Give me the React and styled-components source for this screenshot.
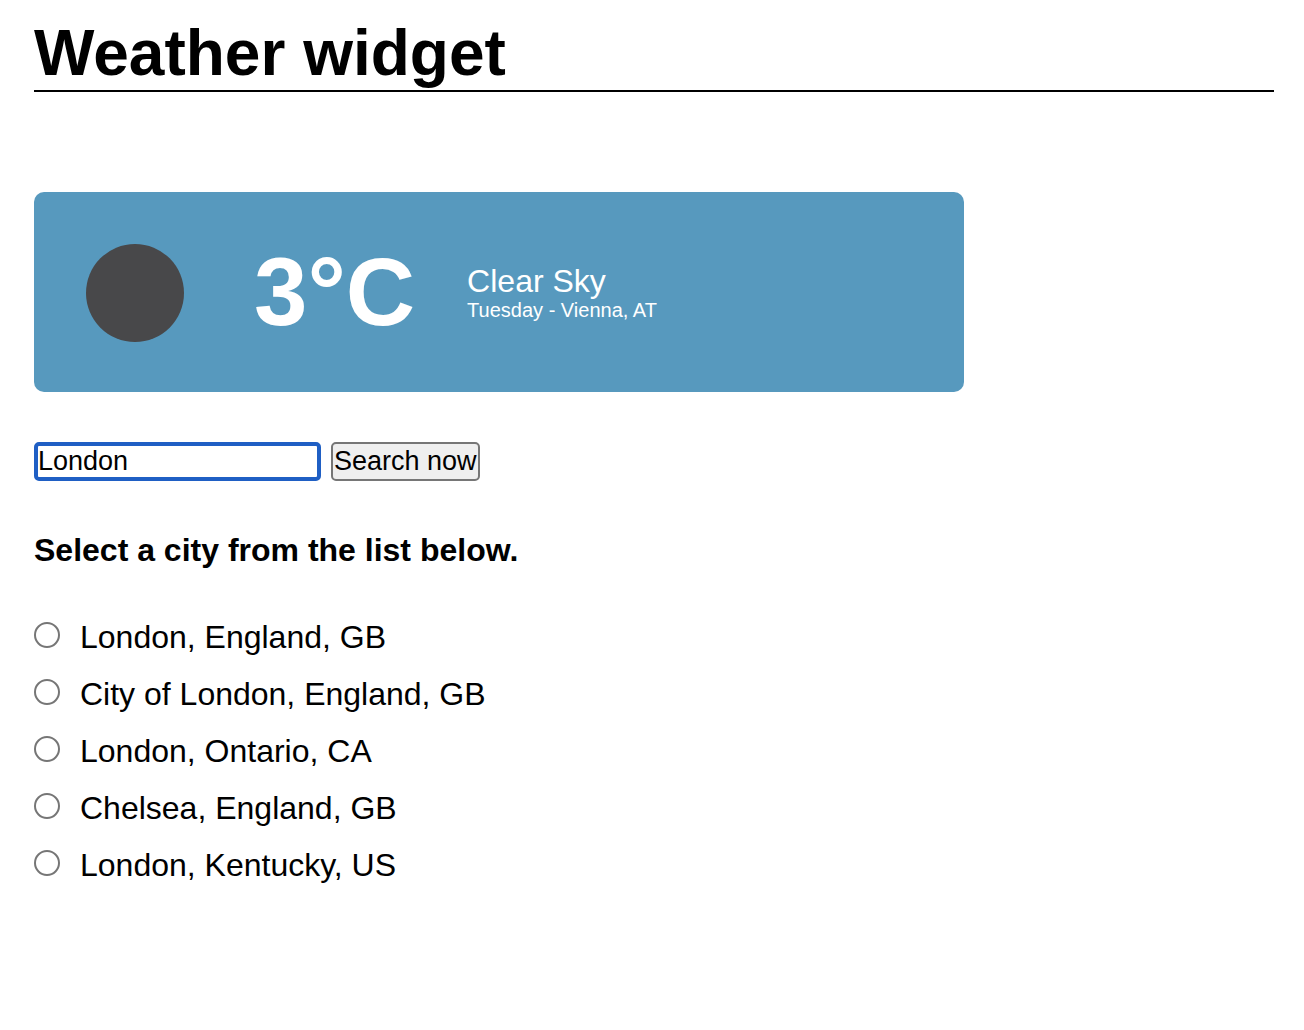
import React, { useState } from "react";
import styled, { createGlobalStyle } from "styled-components";

const GlobalStyle = createGlobalStyle`
  *, *::before, *::after { box-sizing: border-box; }
  body {
    margin: 0;
    background: #fff;
    color: #000;
    font-family: "Liberation Sans", Arial, Helvetica, sans-serif;
    font-size: 32px;
    line-height: 39px;
  }
`;

const Page = styled.main`
  padding: 16px 30px 32px 34px;
`;

const Title = styled.h1`
  margin: 0 0 100px;
  border-bottom: 2px solid #000;
  font-size: 64px;
  font-weight: 700;
  line-height: 74px;
`;

const WeatherCard = styled.section`
  display: flex;
  align-items: center;
  width: 75%;
  padding: 50px;
  margin-bottom: 50px;
  border-radius: 10px;
  background: #5799be;
  color: #fff;
`;

const SkyIcon = styled.svg`
  width: 100px;
  height: 100px;
  flex: none;
`;

const Temperature = styled.strong`
  margin: 0 52px 0 70px;
  font-size: 96px;
  font-weight: 700;
  line-height: 100px;
`;

const Condition = styled.p`
  margin: 0;
  font-size: 32px;
  line-height: 36px;
`;

const Place = styled.p`
  margin: 0;
  font-size: 20px;
  line-height: 22px;
`;

const SearchForm = styled.form`
  display: flex;
  gap: 10px;
  margin-bottom: 50px;
`;

const SearchField = styled.input`
  width: 287px;
  height: 39px;
  padding: 0;
  border: 4px solid #1f5fc4;
  border-radius: 5px;
  background: #fff;
  color: #000;
  font: 27px "Liberation Sans", Arial, sans-serif;
  outline: none;
`;

const SearchButton = styled.button`
  height: 39px;
  padding: 0 1px;
  border: 2px solid #767676;
  border-radius: 5px;
  background: #efefef;
  color: #000;
  font: 27px "Liberation Sans", Arial, sans-serif;
`;

const CityGroup = styled.fieldset`
  min-width: 0;
  margin: 0;
  padding: 0;
  border: 0;
`;

const Legend = styled.legend`
  margin-bottom: 48px;
  padding: 0;
  font-weight: 700;
`;

const CityOption = styled.label`
  display: flex;
  align-items: center;
  gap: 20px;
  margin-bottom: 18px;
`;

const Radio = styled.input`
  appearance: none;
  width: 26px;
  height: 26px;
  margin: 0 0 6px;
  border: 2px solid #767676;
  border-radius: 50%;
  background: #fff;

  &:checked {
    border-color: #1f5fc4;
    background: radial-gradient(#1f5fc4 50%, #fff 55%);
  }
`;

const cities = [
  "London, England, GB",
  "City of London, England, GB",
  "London, Ontario, CA",
  "Chelsea, England, GB",
  "London, Kentucky, US",
];

export default function App() {
  const [query, setQuery] = useState("London");
  const [city, setCity] = useState("");

  return (
    <Page>
      <GlobalStyle />
      <Title>Weather widget</Title>
      <WeatherCard>
        <SkyIcon viewBox="0 0 100 100" aria-hidden="true">
          <circle cx="51" cy="51" r="49" fill="#48484a" />
        </SkyIcon>
        <Temperature>3°C</Temperature>
        <div>
          <Condition>Clear Sky</Condition>
          <Place>Tuesday - Vienna, AT</Place>
        </div>
      </WeatherCard>
      <SearchForm onSubmit={(event) => event.preventDefault()}>
        <SearchField
          aria-label="City"
          value={query}
          onChange={(event) => setQuery(event.target.value)}
        />
        <SearchButton type="submit">Search now</SearchButton>
      </SearchForm>
      <CityGroup>
        <Legend>Select a city from the list below.</Legend>
        {cities.map((name) => (
          <CityOption key={name}>
            <Radio
              type="radio"
              name="city"
              value={name}
              checked={city === name}
              onChange={() => setCity(name)}
            />
            {name}
          </CityOption>
        ))}
      </CityGroup>
    </Page>
  );
}
